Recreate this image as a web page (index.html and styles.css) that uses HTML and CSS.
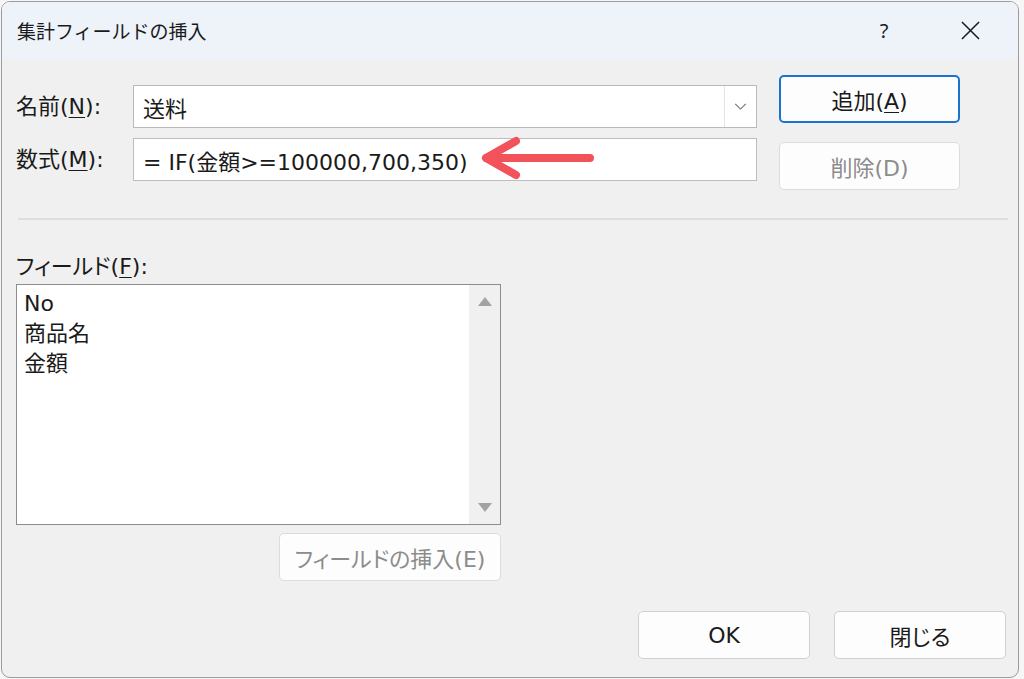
FILE: index.html
```html
<!DOCTYPE html>
<html lang="ja">
<head>
  <meta charset="UTF-8" />
  <title>集計フィールドの挿入</title>
  <link rel="stylesheet" href="styles.css">
</head>
<body>
  <div class="window">
    <div class="titlebar">
      <span class="title">集計フィールドの挿入</span>
      <span class="help">?</span>
      <span class="close">
        <svg width="20" height="20" viewBox="0 0 20 20"><path d="M1 1 L19 19 M19 1 L1 19" stroke="#1b1b1b" stroke-width="1.6" fill="none"/></svg>
      </span>
    </div>

    <div class="content">
      <div class="top">
        <div class="form">
          <div class="field-row">
            <div class="label">名前(<u>N</u>):</div>
            <div class="combo">
              <div class="combo-text">送料</div>
              <div class="combo-btn">
                <svg width="14" height="8" viewBox="0 0 14 8"><path d="M1 1 L7 7 L13 1" stroke="#707070" stroke-width="1.2" fill="none"/></svg>
              </div>
            </div>
          </div>
          <div class="field-row">
            <div class="label">数式(<u>M</u>):</div>
            <div class="input">= IF(金額&gt;=100000,700,350)</div>
          </div>
        </div>
        <div class="side-buttons">
          <button class="btn primary">追加(<u>A</u>)</button>
          <button class="btn disabled">削除(D)</button>
        </div>
      </div>

      <div class="separator"></div>

      <div class="label list-label">フィールド(<u>F</u>):</div>
      <div class="listbox">
        <div class="items">
          <div class="item">No</div>
          <div class="item">商品名</div>
          <div class="item">金額</div>
        </div>
        <div class="scrollbar">
          <span class="arrow up"></span>
          <span class="arrow down"></span>
        </div>
      </div>
      <div class="insert-row">
        <button class="btn disabled insert">フィールドの挿入(E)</button>
      </div>

      <div class="footer">
        <button class="btn footer-btn">OK</button>
        <button class="btn footer-btn">閉じる</button>
      </div>
    </div>

    <!-- 注釈の矢印 -->
    <svg class="annotation" width="130" height="60" viewBox="0 0 130 60">
      <path d="M6 26 L110 26 M6 26 L36 9 M6 26 L36 43" stroke="#f2525a" stroke-width="8" stroke-linecap="round" stroke-linejoin="round" fill="none"/>
    </svg>
  </div>
</body>
</html>
```

FILE: styles.css
```css
:root {
  --text: #1a1a1a;
  --muted: #8c8c8c;
  --face: #f0f0f0;
  --title-bg: #eef3fa;
  --accent: #1a73d0;
}
* { box-sizing: border-box; margin:0; padding:0; }
body {
  background:#f6f6f6;
  font-family:"DejaVu Sans", "Noto Sans CJK JP", sans-serif;
  font-feature-settings:"palt";
  color:var(--text);
  width:1024px; height:679px; overflow:hidden;
}
u { text-decoration-thickness:1px; text-underline-offset:3px; }

.window {
  position:relative;
  margin:1px 0 0 1px;
  width:1018px; height:677px;
  background:var(--face);
  border:1px solid #9c9c9c;
  border-radius:9px;
  overflow:hidden;
}
.titlebar {
  height:57px;
  background:var(--title-bg);
  display:flex; align-items:center;
  padding-left:15px;
}
.title { font-family:"Noto Sans CJK JP", sans-serif; font-feature-settings:normal; font-size:19px; flex:1; }
.help { width:88px; text-align:center; font-size:20px; font-family:"Noto Sans", sans-serif; }
.close { width:84px; display:flex; justify-content:center; margin-right:6px; }
.close svg { width:19px; height:19px; }

.content { padding:16px 12px 0 14px; }
.top { display:flex; }
.form { margin-top:10px; display:flex; flex-direction:column; gap:10px; }
.field-row { display:flex; align-items:center; }
.label { font-size:22px; line-height:28px; width:117px; white-space:nowrap; }
.combo, .input {
  width:624px; height:43px;
  background:#fff;
  border:1px solid #b9b9b9;
  display:flex; align-items:center;
  font-size:22px;
}
.combo-text { flex:1; padding-left:9px; }
.input { padding-left:9px; border-color:#bdbdbd; }
.combo-btn {
  width:32px; height:41px;
  border-left:1px solid #e3e3e3;
  display:flex; align-items:center; justify-content:center;
}
.combo-btn svg { width:13px; height:7px; }

.side-buttons { margin-left:22px; display:flex; flex-direction:column; gap:19px; }
.btn {
  font-family:"DejaVu Sans", "Noto Sans CJK JP", sans-serif;
  font-feature-settings:"palt";
  font-size:22px; color:var(--text);
  background:#fdfdfd;
  border:1px solid #d0d0d0;
  border-radius:5px;
}
.side-buttons .btn { width:181px; height:48px; }
.btn.primary { border:2px solid var(--accent); }
.btn.disabled { color:var(--muted); border-color:#dcdcdc; }

.separator { height:2px; background:#dedede; margin:28px 0 0 2px; width:990px; }

.list-label { margin-top:33px; }
.listbox {
  margin-top:3px;
  width:485px; height:241px;
  background:#fff;
  border:1px solid #8d8d8d;
  display:flex;
}
.items { flex:1; padding:4px 0 0 7px; }
.item { font-size:22px; line-height:30px; }
.scrollbar {
  width:31px; background:#f0f0f0;
  display:flex; flex-direction:column; justify-content:space-between; align-items:center;
  padding:12px 0 12px;
}
.arrow { width:0; height:0; border-left:7px solid transparent; border-right:7px solid transparent; }
.arrow.up { border-bottom:9px solid #a3a3a3; }
.arrow.down { border-top:9px solid #a3a3a3; }

.insert-row { width:485px; display:flex; justify-content:flex-end; margin-top:8px; }
.btn.insert { width:222px; height:48px; }

.footer { display:flex; justify-content:flex-end; gap:24px; margin-top:30px; }
.footer-btn { width:172px; height:48px; }

.annotation { position:absolute; left:478px; top:130px; }
```
